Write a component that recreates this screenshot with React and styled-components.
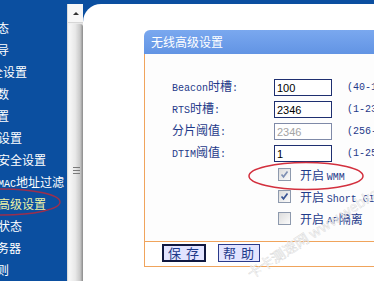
import React from 'react';
import styled, { createGlobalStyle } from 'styled-components';

const NAVY = '#1f3a8a';
const ORANGE = '#f0a45c';
const BLUE = '#0b4fa0';

const GlobalStyle = createGlobalStyle`
  html, body {
    margin: 0;
    padding: 0;
    background: ${BLUE};
  }
  body {
    width: 374px;
    height: 281px;
    overflow: hidden;
  }
`;

const Frame = styled.div`
  position: relative;
  display: flex;
  width: 374px;
  height: 281px;
  overflow: hidden;
  background: ${BLUE};
  font-family: "Noto Sans CJK SC", sans-serif;
`;

const Lat = styled.span`
  font-family: "Liberation Mono", monospace;
  font-size: 10px;
`;

const Sidebar = styled.nav`
  width: 67px;
  flex: none;
  overflow: hidden;
  padding-top: 17px;
  box-sizing: border-box;
`;

const MenuItem = styled.div`
  height: 22px;
  line-height: 22px;
  white-space: nowrap;
  margin-left: ${(p) => (p.$sub ? -26 : -39)}px;
  font-size: 12px;
  color: ${(p) => (p.$active ? '#eef3a6' : '#fff')};
`;

const Scrollbar = styled.div`
  width: 16px;
  flex: none;
  margin-top: 4px;
  display: flex;
  flex-direction: column;
  background: linear-gradient(to right, #f4f4f4, #e2e2e2);
  border-left: 1px solid #dcdcdc;
  box-sizing: border-box;
`;

const ArrowButton = styled.div`
  height: 18px;
  flex: none;
  display: flex;
  align-items: center;
  justify-content: center;
  background: #f7f7f7;
  border-bottom: 1px solid #d6d6d6;

  &::before {
    content: '';
    border-left: 3px solid transparent;
    border-right: 3px solid transparent;
    border-bottom: 3px solid #333;
  }
`;

const Thumb = styled.div`
  flex: 1;
  margin: 1px 0 0 1px;
  border-radius: 3px 3px 0 0;
  background: linear-gradient(
    to right,
    #f8f8f8 0%,
    #e8e8e8 45%,
    #c8c8c8 80%,
    #8a8a8a 100%
  );
  display: flex;
  justify-content: center;
  padding-top: 143px;
`;

const Grip = styled.div`
  width: 7px;
  height: 7px;
  background: repeating-linear-gradient(#7a7a7a 0 1px, transparent 1px 3px);
`;

const Main = styled.main`
  flex: 1;
  min-width: 0;
  margin-top: 4px;
  background: #fff;
  border-top-left-radius: 18px;
  padding: 26px 0 0 61px;
  overflow: hidden;
`;

const Panel = styled.section`
  width: 300px;
`;

const TitleBar = styled.div`
  height: 24px;
  line-height: 24px;
  padding-left: 7px;
  color: #fff;
  font-size: 12px;
  background: linear-gradient(#7aa8ef, #6294e4);
  border-top-left-radius: 6px;
`;

const Body = styled.div`
  border-left: 1px solid ${ORANGE};
  background: #fdfdfd;
  padding: 21px 0 12px 27px;
`;

const Row = styled.div`
  display: grid;
  grid-template-columns: 102px 73px auto;
  align-items: center;
  height: 22px;
  color: ${NAVY};
  font-size: 12px;
  white-space: nowrap;
`;

const Label = styled.span`
  line-height: 22px;
`;

const Field = styled.input`
  box-sizing: border-box;
  width: 58px;
  height: 17px;
  margin: 0;
  padding: 0 2px;
  border: 1px solid ${(p) => (p.disabled ? '#7f8aa8' : '#1e2f70')};
  background: #fff;
  color: ${(p) => (p.disabled ? '#a4a4a4' : '#000')};
  font-family: "Liberation Sans", sans-serif;
  font-size: 11px;
  outline: none;
`;

const Range = styled.span`
  font-family: "Liberation Mono", monospace;
  font-size: 10px;
`;

const CheckCell = styled.label`
  grid-column: 2 / span 2;
  display: flex;
  align-items: center;
  gap: 9px;
  margin-left: 4px;
`;

const Box = styled.span`
  box-sizing: border-box;
  width: 13px;
  height: 13px;
  border: 1px solid #8d99ad;
  background: linear-gradient(135deg, #dcdcdc, #fbfbfb);
  display: flex;
  align-items: center;
  justify-content: center;
`;

const Footer = styled.div`
  display: flex;
  gap: 12px;
  height: 26px;
  padding: 2px 0 0 17px;
  box-sizing: border-box;
  border-top: 1px solid ${ORANGE};
  border-bottom: 1px solid ${ORANGE};
  border-left: 1px solid ${ORANGE};
  background: #fff;
`;

const Button = styled.button`
  box-sizing: border-box;
  height: 18px;
  width: ${(p) => (p.$focus ? 44 : 42)}px;
  padding: 0;
  margin: 0;
  border: ${(p) => (p.$focus ? '2px solid #101840' : '1px solid #2a3a8a')};
  background: #e2e4ff;
  color: ${NAVY};
  font-family: "Noto Sans CJK SC", sans-serif;
  font-size: 13px;
  line-height: 14px;
  letter-spacing: 1px;
`;

const Watermark = styled.span`
  position: absolute;
  left: 252px;
  top: 266px;
  transform-origin: 0 100%;
  transform: rotate(-33deg);
  font-family: "Noto Sans CJK SC", "Liberation Sans", sans-serif;
  font-size: 14px;
  line-height: 14px;
  white-space: nowrap;
  color: rgba(255, 255, 255, 0.85);
  -webkit-text-stroke: 0.35px #cfcfcf;
  pointer-events: none;
`;

const Marks = styled.svg`
  position: absolute;
  left: 0;
  top: 0;
  pointer-events: none;
`;

const menu = [
  { text: '运行状态' },
  { text: '设置向导' },
  { text: <><Lat>QSS</Lat>安全设置</> },
  { text: '网络参数' },
  { text: '无线设置' },
  { text: '基本设置', sub: true },
  { text: '无线安全设置', sub: true },
  { text: <>无线<Lat>MAC</Lat>地址过滤</>, sub: true },
  { text: '无线高级设置', sub: true, active: true },
  { text: '主机状态', sub: true },
  { text: <><Lat>DHCP</Lat>服务器</> },
  { text: '转发规则' },
];

const fields = [
  { label: <><Lat>Beacon</Lat>时槽<Lat>:</Lat></>, value: '100', range: '(40-1000)' },
  { label: <><Lat>RTS</Lat>时槽<Lat>:</Lat></>, value: '2346', range: '(1-2346)' },
  { label: <>分片阈值<Lat>:</Lat></>, value: '2346', range: '(256-2346)', disabled: true },
  { label: <><Lat>DTIM</Lat>阈值<Lat>:</Lat></>, value: '1', range: '(1-255)' },
];

const checks = [
  { text: <>开启 <Lat>WMM</Lat></>, checked: true, dim: true },
  { text: <>开启 <Lat>Short GI</Lat></>, checked: true },
  { text: <>开启 <Lat>AP</Lat>隔离</>, checked: false },
];

const Checkbox = ({ checked, dim }) => (
  <Box>
    {checked && (
      <svg width="9" height="9" viewBox="0 0 9 9">
        <path
          d="M1.5 4.5 L3.5 6.8 L7.5 1.5"
          fill="none"
          stroke={dim ? '#7f90b4' : '#3a5595'}
          strokeWidth="1.7"
        />
      </svg>
    )}
  </Box>
);

export default function App() {
  return (
    <Frame>
      <GlobalStyle />
      <Sidebar>
        {menu.map((m, i) => (
          <MenuItem key={i} $sub={m.sub} $active={m.active}>
            {m.text}
          </MenuItem>
        ))}
      </Sidebar>
      <Scrollbar>
        <ArrowButton />
        <Thumb>
          <Grip />
        </Thumb>
      </Scrollbar>
      <Main>
        <Panel>
          <TitleBar>无线高级设置</TitleBar>
          <Body>
            {fields.map((f, i) => (
              <Row key={i}>
                <Label>{f.label}</Label>
                <Field defaultValue={f.value} disabled={f.disabled} />
                <Range>{f.range}</Range>
              </Row>
            ))}
            {checks.map((c, i) => (
              <Row key={i}>
                <CheckCell>
                  <Checkbox checked={c.checked} dim={c.dim} />
                  <span>{c.text}</span>
                </CheckCell>
              </Row>
            ))}
          </Body>
          <Footer>
            <Button $focus>保 存</Button>
            <Button>帮 助</Button>
          </Footer>
        </Panel>
      </Main>
      <Watermark>卡卡测速网 www.webkaka.com</Watermark>
      <Marks width="374" height="281" viewBox="0 0 374 281">
        <ellipse cx="2" cy="202" rx="58" ry="13" fill="none" stroke="#9c2f4c" strokeWidth="1.4" />
        <ellipse cx="306" cy="176" rx="57" ry="13.5" fill="none" stroke="#d3303e" strokeWidth="1.5" />
      </Marks>
    </Frame>
  );
}
